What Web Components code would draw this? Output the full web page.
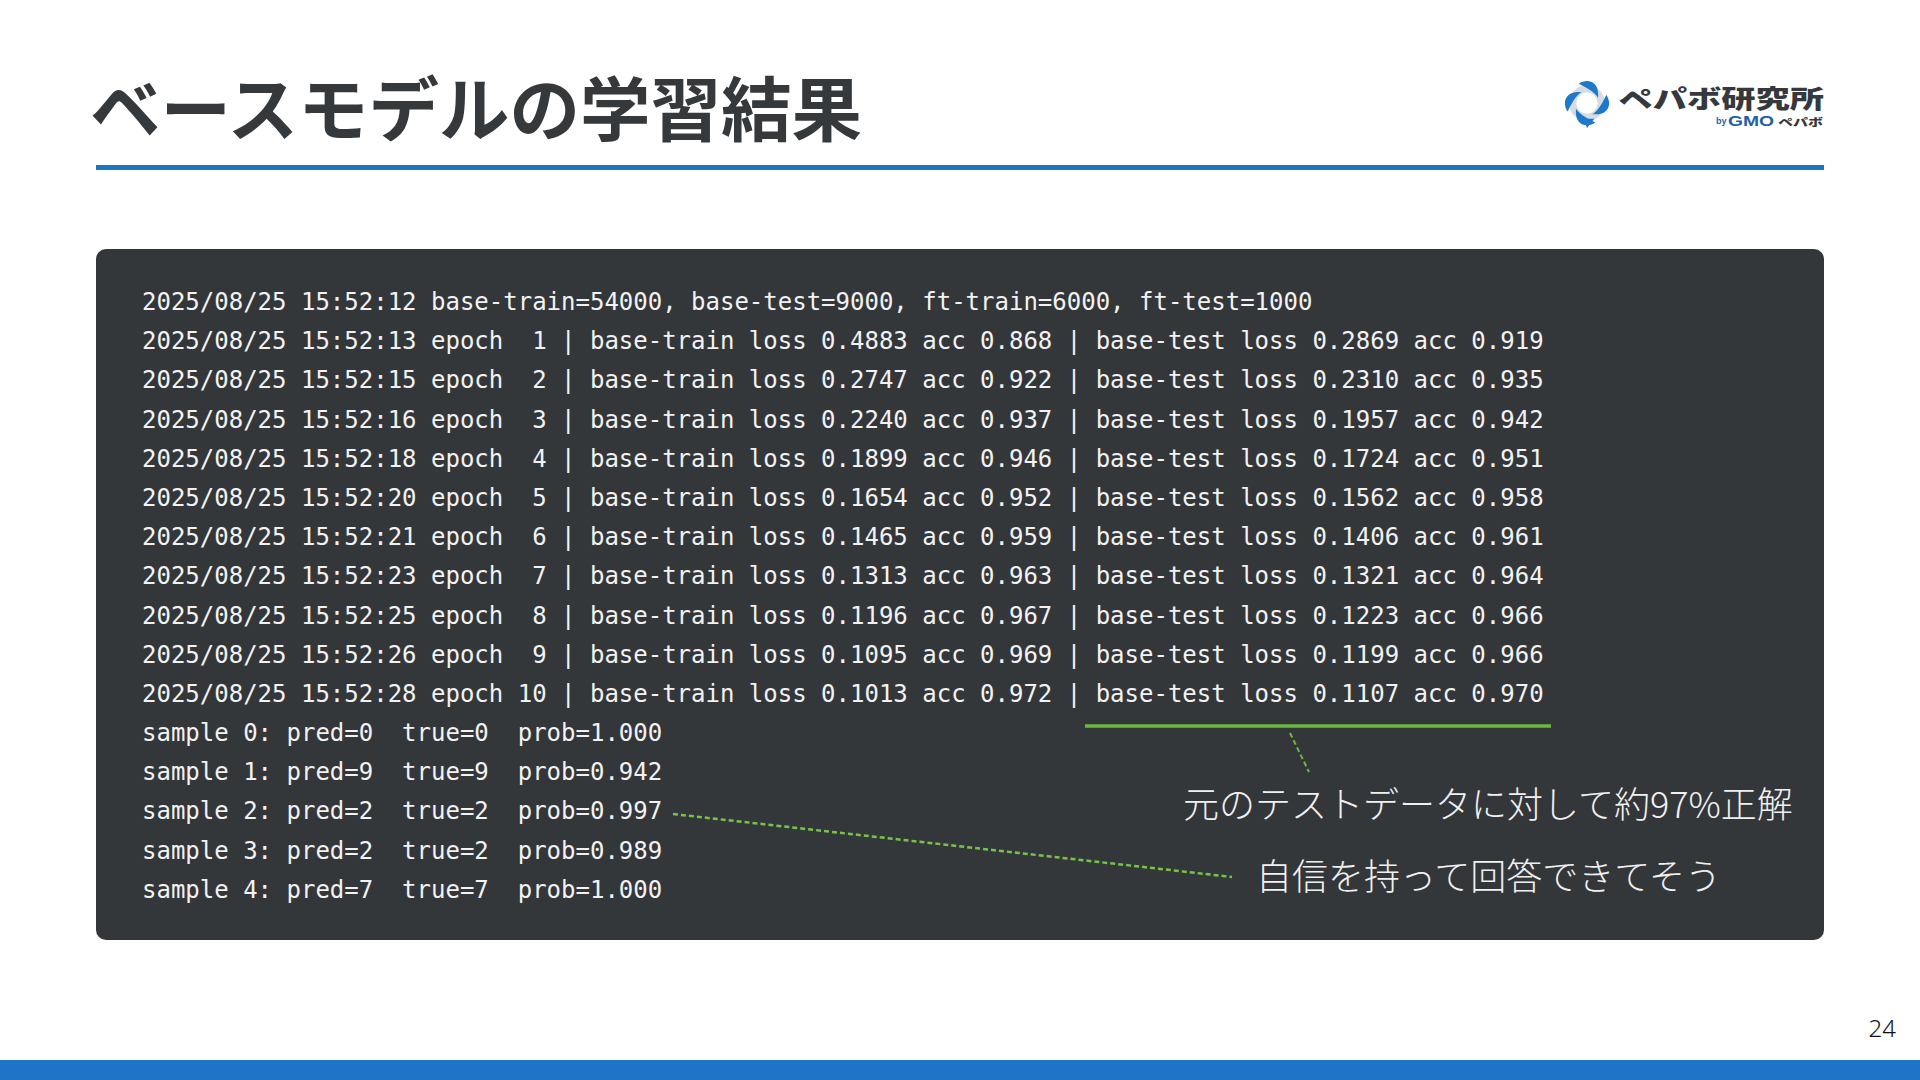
<!DOCTYPE html>
<html lang="ja">
<head>
<meta charset="utf-8">
<title>ベースモデルの学習結果</title>
<style>
  html, body { margin: 0; padding: 0; background: #fff; }
</style>
</head>
<body>
<slide-page>
  <slide-header slot="header" title="ベースモデルの学習結果"><pepabo-logo></pepabo-logo></slide-header>
  <code-card>
    <log-line>2025/08/25 15:52:12 base-train=54000, base-test=9000, ft-train=6000, ft-test=1000</log-line>
    <log-line>2025/08/25 15:52:13 epoch  1 | base-train loss 0.4883 acc 0.868 | base-test loss 0.2869 acc 0.919</log-line>
    <log-line>2025/08/25 15:52:15 epoch  2 | base-train loss 0.2747 acc 0.922 | base-test loss 0.2310 acc 0.935</log-line>
    <log-line>2025/08/25 15:52:16 epoch  3 | base-train loss 0.2240 acc 0.937 | base-test loss 0.1957 acc 0.942</log-line>
    <log-line>2025/08/25 15:52:18 epoch  4 | base-train loss 0.1899 acc 0.946 | base-test loss 0.1724 acc 0.951</log-line>
    <log-line>2025/08/25 15:52:20 epoch  5 | base-train loss 0.1654 acc 0.952 | base-test loss 0.1562 acc 0.958</log-line>
    <log-line>2025/08/25 15:52:21 epoch  6 | base-train loss 0.1465 acc 0.959 | base-test loss 0.1406 acc 0.961</log-line>
    <log-line>2025/08/25 15:52:23 epoch  7 | base-train loss 0.1313 acc 0.963 | base-test loss 0.1321 acc 0.964</log-line>
    <log-line>2025/08/25 15:52:25 epoch  8 | base-train loss 0.1196 acc 0.967 | base-test loss 0.1223 acc 0.966</log-line>
    <log-line>2025/08/25 15:52:26 epoch  9 | base-train loss 0.1095 acc 0.969 | base-test loss 0.1199 acc 0.966</log-line>
    <log-line>2025/08/25 15:52:28 epoch 10 | base-train loss 0.1013 acc 0.972 | base-test loss 0.1107 acc 0.970</log-line>
    <log-line>sample 0: pred=0  true=0  prob=1.000</log-line>
    <log-line>sample 1: pred=9  true=9  prob=0.942</log-line>
    <log-line>sample 2: pred=2  true=2  prob=0.997</log-line>
    <log-line>sample 3: pred=2  true=2  prob=0.989</log-line>
    <log-line>sample 4: pred=7  true=7  prob=1.000</log-line>
  </code-card>
  <slide-footer slot="footer" page="24"></slide-footer>
</slide-page>

<script>
class SlidePage extends HTMLElement {
  constructor() {
    super();
    this.attachShadow({ mode: 'open' }).innerHTML = `<style>
      :host { display: flex; flex-direction: column; width: 1920px; height: 1080px; overflow: hidden; background: #fff; }
      .body { flex: 1; padding: 79px 96px 0 96px; }
    </style>
    <slot name="header"></slot>
    <div class="body"><slot></slot></div>
    <slot name="footer"></slot>`;
  }
}

class SlideHeader extends HTMLElement {
  constructor() {
    super();
    this.attachShadow({ mode: 'open' }).innerHTML = `<style>
      :host { display: block; padding: 0 96px; }
      .row { display: flex; justify-content: space-between; align-items: flex-start; height: 165px; border-bottom: 5px solid #1e75c8; }
      h1 { margin: 59px 0 0 -6px; font: 700 70.5px/92px "Noto Sans CJK JP", sans-serif; color: #36393c; }
    </style>
    <div class="row"><h1></h1><slot></slot></div>`;
  }
  connectedCallback() {
    this.shadowRoot.querySelector('h1').textContent = this.getAttribute('title');
  }
}

class PepaboLogo extends HTMLElement {
  constructor() {
    super();
    // four swooshes around a grey ring, same leaf rotated
    const leaf = 'M-9,-21 C-1,-27 14,-25 12,-6 C8,-12 1,-16 -9,-21 Z';
    const leaves = [0, 90, 180, 270].map(r =>
      `<path d="${leaf}" transform="rotate(${r})" fill="#1e78cc"/>`).join('');
    this.attachShadow({ mode: 'open' }).innerHTML = `<style>
      :host { display: flex; align-items: flex-start; gap: 9px; margin-top: 80px; font-family: "Noto Sans CJK JP", sans-serif; }
      svg { width: 46px; height: 50px; flex-shrink: 0; margin-top: 0; }
      .text { width: 205px; display: flex; flex-direction: column; align-items: flex-end; }
      .name { height: 28px; line-height: 28px; margin-top: 3px; font-size: 25px; font-weight: 900; color: #36393c; white-space: nowrap; transform: scaleX(1.37); transform-origin: right center; }
      .by { display: flex; align-items: center; height: 14px; margin-top: 3px; font-size: 10px; font-weight: 900; color: #36393c; white-space: nowrap; }
      .by small { width: 12px; font: 700 9px "Liberation Sans", sans-serif; color: #1f5fa8; }
      .by b { width: 47px; margin-right: 3px; font: 900 14px "Liberation Sans", sans-serif; color: #1f5fa8; }
      .by b i { display: inline-block; font-style: normal; transform: scaleX(1.38); transform-origin: left center; }
      .by span { display: inline-block; width: 46px; }
      .by span i { display: inline-block; font-style: normal; transform: scaleX(1.5); transform-origin: left center; }
    </style>
    <svg viewBox="-25 -25 50 54">
      <circle r="15.5" fill="none" stroke="#d6dce1" stroke-width="8"/>
      ${leaves}
      <path d="M-4,17 L0,27 L8,17 Z" fill="#1e78cc"/>
    </svg>
    <div class="text">
      <div class="name">ペパボ研究所</div>
      <div class="by"><small>by</small><b><i>GMO</i></b><span><i>ペパボ</i></span></div>
    </div>`;
  }
}

class LogLine extends HTMLElement {
  constructor() {
    super();
    this.attachShadow({ mode: 'open' }).innerHTML = `<style>
      :host { display: block; width: fit-content; height: 39.2px; font: 24px/39.2px "DejaVu Sans Mono", monospace; color: #f2f2f2; white-space: pre; }
    </style><slot></slot>`;
  }
}

class CodeCard extends HTMLElement {
  constructor() {
    super();
    this.attachShadow({ mode: 'open' }).innerHTML = `<style>
      :host { display: block; position: relative; box-sizing: border-box; height: 691px; padding: 34px 46px 0 46px; background: #34373a; border-radius: 10px; }
      svg { position: absolute; inset: 0; width: 100%; height: 100%; pointer-events: none; }
      .note { position: absolute; font: 300 36px/52px "Noto Sans CJK JP", sans-serif; color: #f0f0f0; white-space: nowrap; }
    </style>
    <slot></slot>
    <svg viewBox="0 0 1728 691">
      <line x1="989" y1="477" x2="1455" y2="477" stroke="#6cb83f" stroke-width="3.5"/>
      <line x1="1194" y1="484" x2="1213" y2="523" stroke="#6cb83f" stroke-width="2" stroke-dasharray="5 3"/>
      <line x1="577" y1="565" x2="1136" y2="628" stroke="#78c24a" stroke-width="2.5" stroke-dasharray="5 3"/>
    </svg>
    <div class="note" style="left:1087px;top:527px">元のテストデータに対して約97%正解</div>
    <div class="note" style="left:1160px;top:599px">自信を持って回答できてそう</div>`;
  }
}

class SlideFooter extends HTMLElement {
  constructor() {
    super();
    this.attachShadow({ mode: 'open' }).innerHTML = `<style>
      :host { display: block; }
      .num { text-align: right; padding-right: 24px; font: 300 24px/36px "Noto Sans", sans-serif; color: #111; }
      .bar { height: 20px; margin-top: 14px; background: #1e75c8; }
    </style>
    <div class="num"></div>
    <div class="bar"></div>`;
  }
  connectedCallback() {
    this.shadowRoot.querySelector('.num').textContent = this.getAttribute('page');
  }
}

customElements.define('slide-page', SlidePage);
customElements.define('slide-header', SlideHeader);
customElements.define('pepabo-logo', PepaboLogo);
customElements.define('log-line', LogLine);
customElements.define('code-card', CodeCard);
customElements.define('slide-footer', SlideFooter);
</script>
</body>
</html>
